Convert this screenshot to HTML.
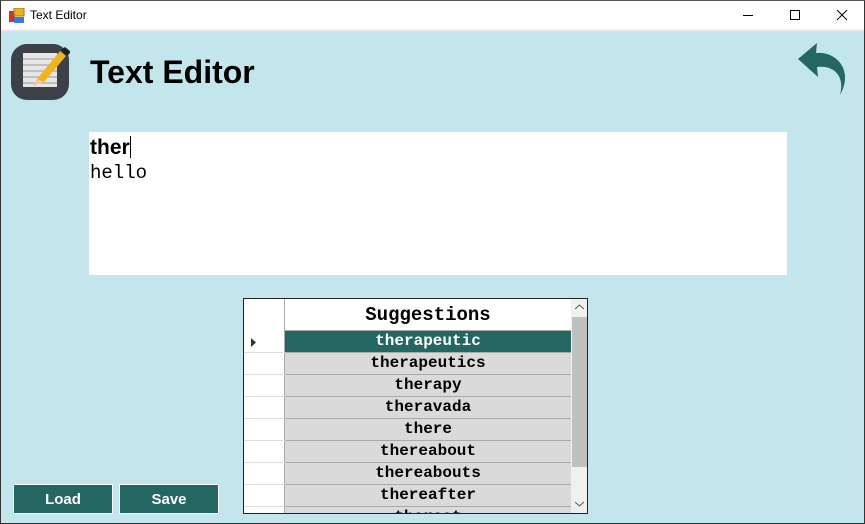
<!DOCTYPE html>
<html><head><meta charset="utf-8"><style>
*{margin:0;padding:0;box-sizing:border-box}
body{width:865px;height:524px;overflow:hidden;background:#c2e6ec;position:relative;font-family:"Liberation Sans",sans-serif}
.tb{position:absolute;left:0;top:0;width:865px;height:31px;background:#fff;border-bottom:2px solid #eee}
.tb .t{position:absolute;left:30px;top:8px;font-size:12px;color:#000}
.frame{position:absolute;inset:0;border:1px solid #333;border-top:1px solid #555;pointer-events:none}
.title{position:absolute;left:90px;top:54px;font-size:32px;font-weight:bold;color:#000}
.edit{position:absolute;left:89px;top:132px;width:698px;height:143px;background:#fff}
.grid{position:absolute;left:243px;top:298px;width:345px;height:216px;border:1px solid #222;background:#fff;overflow:hidden}
.rh{position:absolute;left:0;top:0;width:41px;height:216px;border-right:1px solid #aaa}
.hd{position:absolute;left:41px;top:0;width:286px;height:32px;border-bottom:1px solid #aaa;font:bold 19px "Liberation Mono",monospace;text-align:center;line-height:32px}
.row{position:absolute;left:41px;width:286px;height:22px;background:#dadada;border-bottom:1px solid #aaa;font:bold 16px "Liberation Mono",monospace;text-align:center;line-height:21px}
.rl{position:absolute;left:0;width:41px;border-bottom:1px solid #ddd;height:22px}
.sb{position:absolute;left:327px;top:0;width:17px;height:214px;background:#f0f0f0}
.btn{position:absolute;top:484px;width:100px;height:30px;background:#246662;border:1px solid #fff;color:#fff;font-weight:bold;font-size:15px;text-align:center;line-height:30px}
</style></head><body>
<div class="tb">
<svg style="position:absolute;left:9px;top:8px" width="16" height="16"><rect x="0" y="3" width="6" height="11" fill="#c33"/><rect x="5" y="0" width="10" height="8" fill="#e8b030" stroke="#a70"/><rect x="5" y="9" width="10" height="6" fill="#3a7ad8"/></svg>
<div class="t">Text Editor</div>
<div style="position:absolute;left:743px;top:15px;width:10px;height:1px;background:#000"></div>
<div style="position:absolute;left:790px;top:10px;width:10px;height:10px;border:1px solid #000"></div>
<svg style="position:absolute;left:836px;top:9px" width="12" height="12"><path d="M1 1L11 11M11 1L1 11" stroke="#000" stroke-width="1"/></svg>
</div>
<svg style="position:absolute;left:10px;top:43px" width="60" height="58">
<rect x="1" y="1" width="58" height="56" rx="16" fill="#3c4048"/>
<rect x="13" y="10" width="34" height="34" fill="#e6e6e6"/>
<g stroke="#999" stroke-width="1"><line x1="13" y1="16" x2="47" y2="16"/><line x1="13" y1="22" x2="47" y2="22"/><line x1="13" y1="28" x2="47" y2="28"/><line x1="13" y1="34" x2="47" y2="34"/><line x1="13" y1="40" x2="47" y2="40"/></g>
<path d="M50 8L56 13L34 39L27 36Z" fill="#f2b41e"/><path d="M27 36L34 39L23 43Z" fill="#f1c898"/><path d="M51 7l4-3 6 5-4 4z" fill="#222"/>
</svg>
<div class="title">Text Editor</div>
<svg style="position:absolute;left:797px;top:41px" width="60" height="55"><path d="M1 18L20 2L19 12C40 10 57 30 43 54C48 36 38 24 20 26L21 36Z" fill="#246662"/></svg>
<div class="edit">
<div style="position:absolute;left:1px;top:4px;font-size:21px;font-weight:bold">ther<span style="display:inline-block;width:1px;height:22px;background:#000;vertical-align:-4px"></span></div>
<div style="position:absolute;left:1px;top:30px;font:19px 'Liberation Mono',monospace">hello</div>
</div>
<div class="grid">
<div class="rh"></div>
<div class="hd">Suggestions</div>
<div class="row" style="top:32px;background:#246662;color:#fff">therapeutic</div>
<div class="row" style="top:54px">therapeutics</div>
<div class="row" style="top:76px">therapy</div>
<div class="row" style="top:98px">theravada</div>
<div class="row" style="top:120px">there</div>
<div class="row" style="top:142px">thereabout</div>
<div class="row" style="top:164px">thereabouts</div>
<div class="row" style="top:186px">thereafter</div>
<div class="row" style="top:208px">thereat</div>
<div class="rl" style="top:32px"></div><div class="rl" style="top:54px"></div><div class="rl" style="top:76px"></div><div class="rl" style="top:98px"></div><div class="rl" style="top:120px"></div><div class="rl" style="top:142px"></div><div class="rl" style="top:164px"></div><div class="rl" style="top:186px"></div><div class="rl" style="top:208px"></div>
<svg style="position:absolute;left:7px;top:39px" width="6" height="9"><path d="M0 0L5 4.5L0 9Z" fill="#333"/></svg>
<div class="sb"><div style="position:absolute;left:1px;top:18px;width:15px;height:150px;background:#c0c0c0"></div>
<svg style="position:absolute;left:4px;top:5px" width="9" height="6"><path d="M0 5L4.5 1L9 5" stroke="#555" fill="none"/></svg>
<svg style="position:absolute;left:4px;top:202px" width="9" height="6"><path d="M0 1L4.5 5L9 1" stroke="#555" fill="none"/></svg></div>
</div>
<div class="btn" style="left:13px">Load</div>
<div class="btn" style="left:119px">Save</div>
<div class="frame"></div>
</body></html>
